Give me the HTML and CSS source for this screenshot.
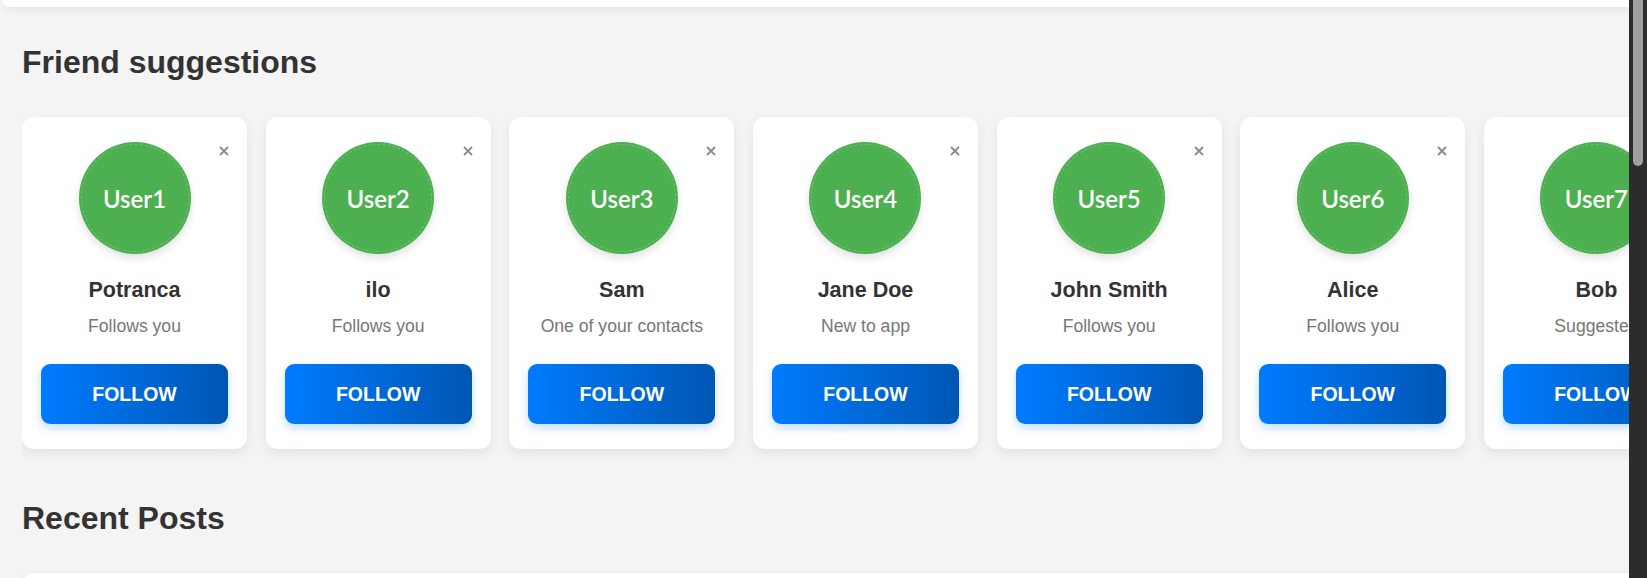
FILE: index.html
```html
<!DOCTYPE html>
<html lang="en">
<head>
<meta charset="utf-8">
<title>Friend suggestions</title>
<link rel="stylesheet" href="styles.css">
</head>
<body>
<div class="page">
  <div class="topbar"></div>
  <h2 class="section-title">Friend suggestions</h2>
  <div class="suggestions">
    <div class="card">
      <button class="dismiss" aria-label="Dismiss"><svg viewBox="0 0 10 10" width="10" height="10"><path d="M1 1L9 9M9 1L1 9"/></svg></button>
      <div class="avatar"><span>User1</span></div>
      <div class="name">Potranca</div>
      <div class="reason">Follows you</div>
      <button class="follow">FOLLOW</button>
    </div>
    <div class="card">
      <button class="dismiss" aria-label="Dismiss"><svg viewBox="0 0 10 10" width="10" height="10"><path d="M1 1L9 9M9 1L1 9"/></svg></button>
      <div class="avatar"><span>User2</span></div>
      <div class="name">ilo</div>
      <div class="reason">Follows you</div>
      <button class="follow">FOLLOW</button>
    </div>
    <div class="card">
      <button class="dismiss" aria-label="Dismiss"><svg viewBox="0 0 10 10" width="10" height="10"><path d="M1 1L9 9M9 1L1 9"/></svg></button>
      <div class="avatar"><span>User3</span></div>
      <div class="name">Sam</div>
      <div class="reason">One of your contacts</div>
      <button class="follow">FOLLOW</button>
    </div>
    <div class="card">
      <button class="dismiss" aria-label="Dismiss"><svg viewBox="0 0 10 10" width="10" height="10"><path d="M1 1L9 9M9 1L1 9"/></svg></button>
      <div class="avatar"><span>User4</span></div>
      <div class="name">Jane Doe</div>
      <div class="reason">New to app</div>
      <button class="follow">FOLLOW</button>
    </div>
    <div class="card">
      <button class="dismiss" aria-label="Dismiss"><svg viewBox="0 0 10 10" width="10" height="10"><path d="M1 1L9 9M9 1L1 9"/></svg></button>
      <div class="avatar"><span>User5</span></div>
      <div class="name">John Smith</div>
      <div class="reason">Follows you</div>
      <button class="follow">FOLLOW</button>
    </div>
    <div class="card">
      <button class="dismiss" aria-label="Dismiss"><svg viewBox="0 0 10 10" width="10" height="10"><path d="M1 1L9 9M9 1L1 9"/></svg></button>
      <div class="avatar"><span>User6</span></div>
      <div class="name">Alice</div>
      <div class="reason">Follows you</div>
      <button class="follow">FOLLOW</button>
    </div>
    <div class="card">
      <button class="dismiss" aria-label="Dismiss"><svg viewBox="0 0 10 10" width="10" height="10"><path d="M1 1L9 9M9 1L1 9"/></svg></button>
      <div class="avatar"><span>User7</span></div>
      <div class="name">Bob</div>
      <div class="reason">Suggested</div>
      <button class="follow">FOLLOW</button>
    </div>
  </div>
  <h2 class="section-title recent">Recent Posts</h2>
  <div class="post-card"></div>
</div>
<div class="scrollbar"><div class="thumb"></div></div>
</body>
</html>
```

FILE: styles.css
```css
* { box-sizing: border-box; }

html, body {
  margin: 0;
  height: 100%;
  overflow: hidden;
}

body {
  display: flex;
  background: #f4f4f4;
  font-family: "Liberation Sans", Arial, sans-serif;
  color: #333;
}

.page {
  flex: 1;
  min-width: 0;
  overflow: hidden;
  background: #f4f4f4;
}

.topbar {
  height: 7px;
  margin-left: 3px;
  margin-right: -20px;
  background: #fff;
  border-radius: 0 0 11px 11px;
  box-shadow: 0 2px 8px rgba(0, 0, 0, 0.08);
}

.section-title {
  margin: 37px 0 0 22px;
  font-size: 32px;
  line-height: 37px;
  font-weight: bold;
  color: #333;
}

.suggestions {
  display: flex;
  gap: 18.67px;
  margin: 26px 0 0 22px;
  padding: 10px 0 12px;
  overflow: hidden;
}

.card {
  position: relative;
  flex: 0 0 225px;
  width: 225px;
  padding: 25px 19px 25px;
  background: #fff;
  border-radius: 12px;
  box-shadow: 0 4px 12px rgba(0, 0, 0, 0.08);
  display: flex;
  flex-direction: column;
  align-items: center;
  text-align: center;
}

.dismiss {
  position: absolute;
  top: 29px;
  right: 18px;
  width: 10px;
  height: 10px;
  padding: 0;
  border: 0;
  background: none;
  display: block;
}

.dismiss svg {
  display: block;
  stroke: #8a8a8a;
  stroke-width: 1.8;
  fill: none;
}

.avatar {
  position: relative;
  width: 112px;
  height: 112px;
  border-radius: 50%;
  background: #4caf50;
  box-shadow: 0 4px 8px rgba(0, 0, 0, 0.12);
  display: flex;
  align-items: center;
  justify-content: center;
}

.avatar::after {
  content: "";
  position: absolute;
  inset: 2px;
  border-radius: 50%;
  border: 1px dashed rgba(255, 255, 255, 0.2);
}

.avatar span {
  font-family: Lato, "Liberation Sans", sans-serif;
  font-weight: 600;
  font-size: 24px;
  color: #fff;
}

.name {
  margin-top: 24px;
  font-size: 21.5px;
  line-height: 25px;
  font-weight: bold;
  color: #333;
  white-space: nowrap;
}

.reason {
  margin-top: 12px;
  font-size: 17.6px;
  line-height: 22px;
  color: #777;
  white-space: nowrap;
}

.follow {
  margin-top: 27px;
  width: 100%;
  height: 60px;
  border: 0;
  border-radius: 9px;
  background: linear-gradient(90deg, #007bff, #0056b3);
  box-shadow: 0 4px 10px rgba(0, 123, 255, 0.25);
  color: #fff;
  font-family: "Liberation Sans", Arial, sans-serif;
  font-weight: bold;
  font-size: 19.5px;
  display: flex;
  align-items: center;
  justify-content: center;
}

.section-title.recent {
  margin-top: 39px;
}

.post-card {
  margin: 36px -20px 0 22px;
  height: 120px;
  background: #fff;
  border-radius: 12px;
  box-shadow: 0 2px 8px rgba(0, 0, 0, 0.08);
}

.scrollbar {
  flex: 0 0 18px;
  background: #2c2c2c;
  padding: 0 4px;
}

.thumb {
  height: 166px;
  background: #9f9f9f;
  border-radius: 0 0 5px 5px;
}
```
